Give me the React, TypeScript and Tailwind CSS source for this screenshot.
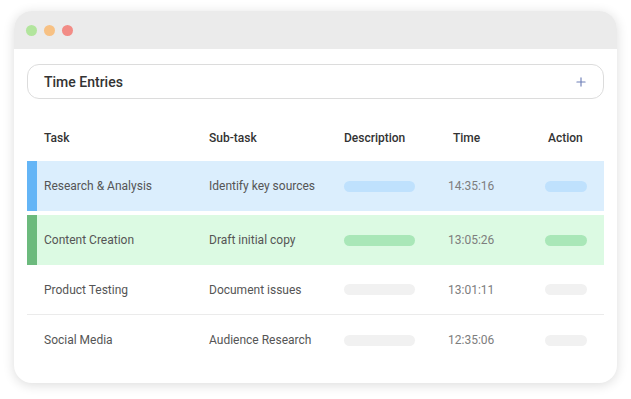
import { Plus } from "lucide-react";

type Row = {
  task: string;
  sub: string;
  time: string;
  tone: "blue" | "green" | "none";
};

const rows: Row[] = [
  { task: "Research & Analysis", sub: "Identify key sources", time: "14:35:16", tone: "blue" },
  { task: "Content Creation", sub: "Draft initial copy", time: "13:05:26", tone: "green" },
  { task: "Product Testing", sub: "Document issues", time: "13:01:11", tone: "none" },
  { task: "Social Media", sub: "Audience Research", time: "12:35:06", tone: "none" },
];

const cols = "grid grid-cols-[165px_135px_104px_97px_1fr] items-center";

function EntryRow({ row, last }: { row: Row; last: boolean }) {
  const bg =
    row.tone === "blue" ? "bg-[#dbeefd]" : row.tone === "green" ? "bg-[#dcfae3]" : "bg-white";
  const bar =
    row.tone === "blue" ? "bg-[#64b5f6]" : row.tone === "green" ? "bg-[#6cba7d]" : "bg-transparent";
  const pill =
    row.tone === "blue" ? "bg-[#bfe1fd]" : row.tone === "green" ? "bg-[#a9e7b8]" : "bg-[#f1f1f1]";
  const border = row.tone === "none" && !last ? "border-b border-[#ebebeb]" : "";

  return (
    <div className={`flex h-[50px] ${bg} ${border}`}>
      <div className={`w-[10px] ${bar}`} />
      <div className={`${cols} flex-1 pl-[7px] text-[12px] text-[#555]`}>
        <span>{row.task}</span>
        <span>{row.sub}</span>
        <span className={`h-[11px] w-[71px] rounded-full ${pill}`} />
        <span className="text-[#7d7d7d]">{row.time}</span>
        <span className={`h-[11px] w-[42px] rounded-full ${pill}`} />
      </div>
    </div>
  );
}

export default function App() {
  return (
    <div className="h-[399px] w-[631px] bg-white pl-[14px] pt-[11px] font-['Roboto',sans-serif]">
      <div className="h-[372px] w-[603px] overflow-hidden rounded-[18px] bg-white shadow-[0_2px_12px_rgba(0,0,0,0.14)]">
        <div className="flex h-[38px] items-center gap-[7px] bg-[#ebebeb] pl-[12px]">
          <span className="h-[11px] w-[11px] rounded-full bg-[#b2e59d]" />
          <span className="h-[11px] w-[11px] rounded-full bg-[#f7c184]" />
          <span className="h-[11px] w-[11px] rounded-full bg-[#f28c86]" />
        </div>
        <div className="px-[13px] pt-[15px]">
          <div className="flex h-[35px] items-center justify-between rounded-[12px] border border-[#dcdcdc] pl-[16px] pr-[15px] pt-[1px]">
            <span className="text-[14px] font-medium text-[#333]">Time Entries</span>
            <Plus size={14} strokeWidth={2} className="text-[#6f80b8]" />
          </div>
          <div className={`${cols} mt-[26px] h-[26px] pl-[17px] text-[12px] font-medium text-[#333]`}>
            <span>Task</span>
            <span>Sub-task</span>
            <span>Description</span>
            <span className="pl-[5px]">Time</span>
            <span className="pl-[3px]">Action</span>
          </div>
          <div className="mt-[10px] flex flex-col">
            {rows.map((r, i) => (
              <div key={r.task} className={i === 1 ? "mt-[4px]" : ""}>
                <EntryRow row={r} last={i === rows.length - 1} />
              </div>
            ))}
          </div>
        </div>
      </div>
    </div>
  );
}
